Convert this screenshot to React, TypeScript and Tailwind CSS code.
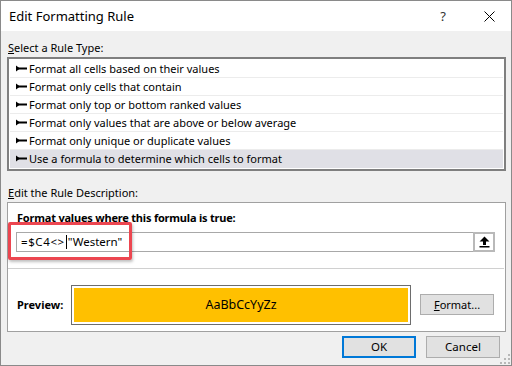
import React from "react";

const ruleTypes = [
  "Format all cells based on their values",
  "Format only cells that contain",
  "Format only top or bottom ranked values",
  "Format only values that are above or below average",
  "Format only unique or duplicate values",
  "Use a formula to determine which cells to format",
];

const font = { fontFamily: '"Noto Sans", "Open Sans", sans-serif' };

function Pointer() {
  return (
    <svg width="11" height="7" viewBox="0 0 11 7" className="mr-[2px] shrink-0">
      <polygon points="0,0.5 4,3.5 0,6.5" fill="#000" />
      <rect x="2" y="2.5" width="9" height="2" fill="#000" />
    </svg>
  );
}

function UploadIcon() {
  return (
    <svg width="11" height="12" viewBox="0 0 11 12">
      <polygon points="5.5,0.5 10.5,5.5 7,5.5 7,9 4,9 4,5.5 0.5,5.5" fill="#000" />
      <rect x="0.5" y="10" width="10" height="1.5" fill="#000" />
    </svg>
  );
}

function Grip() {
  const dots = [
    [8, 0],
    [4, 4],
    [8, 4],
    [0, 8],
    [4, 8],
    [8, 8],
  ];
  return (
    <svg width="10" height="10" viewBox="0 0 10 10" className="absolute bottom-[1px] right-[1px]">
      {dots.map(([x, y]) => (
        <rect key={`${x}-${y}`} x={x} y={y} width="2" height="2" fill="#b8b8b8" />
      ))}
    </svg>
  );
}

export default function App() {
  return (
    <div
      className="relative flex h-[366px] w-[512px] flex-col border border-[#8a8a8a] bg-[#f0f0f0] text-[11px] text-black"
      style={font}
    >
      {/* title bar */}
      <div className="flex h-[30px] shrink-0 items-center bg-white pl-[8px]">
        <span className="pt-[1px] text-[13px] leading-none">Edit Formatting Rule</span>
        <span className="ml-auto mr-[38px] text-[13px] leading-none text-[#333]">?</span>
        <svg width="11" height="11" viewBox="0 0 11 11" className="mr-[16px]">
          <path d="M0.5 0.5 L10.5 10.5 M10.5 0.5 L0.5 10.5" stroke="#000" strokeWidth="1" />
        </svg>
      </div>

      <div className="flex flex-col pl-[6px] pr-[5px] pt-[9px]">
        <div className="h-[16px] pl-[1px] leading-[16px]">
          <span className="underline">S</span>elect a Rule Type:
        </div>

        {/* rule type list */}
        <div className="mt-[1px] border-2 border-[#7f7f7f] bg-white p-[1px]">
          {ruleTypes.map((t, i) => (
            <div
              key={t}
              className={`flex h-[18px] items-center border-b pl-[6px] leading-none ${
                i === ruleTypes.length - 1
                  ? "border-transparent bg-[#e0e0e6]"
                  : "border-[#ececec]"
              }`}
            >
              <Pointer />
              {t}
            </div>
          ))}
        </div>

        <div className="mt-[14px] h-[16px] pl-[1px] leading-[16px]">
          <span className="underline">E</span>dit the Rule Description:
        </div>

        {/* rule description panel */}
        <div className="relative mt-[1px] border border-[#a0a0a0] bg-white pb-[6px] pt-[7px]">
          <div className="h-[16px] pl-[9px] font-bold leading-[16px] tracking-[-0.2px]">
            Format values where this formula is true:
          </div>

          <div className="ml-[8px] mr-[10px] mt-[6px] flex h-[20px] items-center border border-[#a8a8a8] bg-white">
            <div className="flex flex-1 items-center pl-[4px] text-[11.5px] leading-none">
              <span className="tracking-[0.6px]">=$C4&lt;&gt;</span>
              <span className="mx-[1px] inline-block h-[14px] w-[1px] bg-black" />
              <span>"Western"</span>
            </div>
            <div className="-mr-[1px] flex h-[20px] w-[22px] items-center justify-center border-2 border-[#b9b9b9] bg-white">
              <UploadIcon />
            </div>
          </div>

          <div className="mr-[1px] mt-[16px] h-[1px] bg-[#d0d0d0]" />

          <div className="mt-[16px] flex items-center">
            <div className="w-[63px] pl-[9px] font-bold">Preview:</div>
            <div className="flex h-[40px] w-[340px] border border-[#6d6d6d] bg-white p-[2px]">
              <div className="flex flex-1 items-center justify-center bg-[#ffc000] text-[12.5px]">
                AaBbCcYyZz
              </div>
            </div>
            <button className="ml-[9px] mt-[-1px] flex h-[21px] w-[74px] items-center justify-center border border-[#adadad] bg-[#e1e1e1] leading-none">
              <span className="underline">F</span>ormat...
            </button>
          </div>

          {/* highlight annotation */}
          <div className="pointer-events-none absolute left-[0px] top-[19px] h-[38px] w-[124px] rounded-[2px] border-[3px] border-[#ec4650] shadow-[1px_2px_3px_rgba(0,0,0,0.25)]" />
        </div>

        {/* footer buttons */}
        <div className="mt-[4px] flex justify-end gap-[10px] pr-[6px]">
          <button className="flex h-[22px] w-[74px] items-center justify-center border-2 border-[#0078d7] bg-[#e1e1e1] text-[11.5px] leading-none">
            OK
          </button>
          <button className="flex h-[22px] w-[74px] items-center justify-center border border-[#adadad] bg-[#e1e1e1] text-[11.5px] leading-none">
            Cancel
          </button>
        </div>
      </div>

      <Grip />
    </div>
  );
}
